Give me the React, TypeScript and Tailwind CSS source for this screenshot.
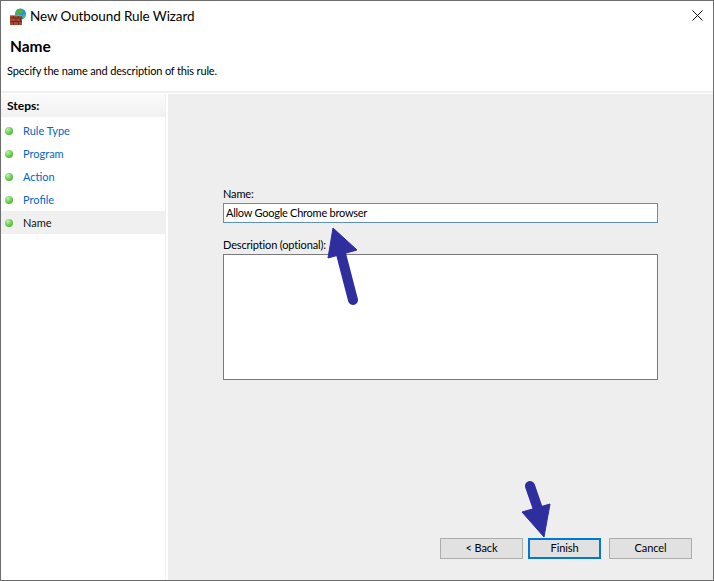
import React from "react";

const steps = ["Rule Type", "Program", "Action", "Profile", "Name"];

const WizardIcon = () => (
  <svg width="17" height="17" viewBox="0 0 17 17" className="shrink-0">
    <circle cx="10.5" cy="6" r="5.500" fill="#2b8fdc" />
    <path d="M7 1.500c2-1 4.500-1 5.500.5s-.5 3-2 3.500-1.500 2.500-3 2-2-5-.5-6z" fill="#4fb04a" />
    <path d="M13 6.500c1 0 2.300.2 2.800.6-.2 1.500-1 2.900-2 3.400l-1.500-1.500z" fill="#62b84f" />
    <rect x="0" y="7" width="12" height="10" fill="#a84a34" />
    <path d="M0 10h12M0 13.500h12M3.500 7v3M8.500 7v3M6 10v3.500M10.500 10v3.500M3.500 13.500V17M8.500 13.500V17" stroke="#6f2c1d" strokeWidth="1" />
    <path d="M0 7.500h12" stroke="#cf8268" strokeWidth="1" />
  </svg>
);

const StepDot = () => (
  <span className="w-2 h-2 rounded-full shrink-0 bg-[radial-gradient(circle_at_35%_30%,#c4eeb0,#5cc63e_60%,#3fa52c)]" />
);

const WizardButton = ({ label, active }: { label: string; active?: boolean }) => (
  <button
    className={
      "h-[21px] bg-[#e1e1e1] text-[11px] tracking-[-0.1px] text-black " +
      (active ? "w-[73px] border-2 border-[#0078d7]" : "w-[83px] border border-[#adadad]")
    }
  >
    {label}
  </button>
);

export default function App() {
  return (
    <div className="relative w-[714px] h-[581px] flex flex-col overflow-hidden bg-white border border-[#6d6d6d] font-['Lato',sans-serif] text-[11px] tracking-[-0.15px] text-black">
      {/* title bar */}
      <div className="h-[31px] flex items-center pl-[9px] pr-[10px] shrink-0">
        <WizardIcon />
        <span className="ml-[3px] text-[13.5px] tracking-[-0.1px] text-[#000]">New Outbound Rule Wizard</span>
        <svg width="11" height="11" viewBox="0 0 11 11" className="ml-auto mb-[2px]">
          <path d="M.5.5l10 10M10.500.5l-10 10" stroke="#111" strokeWidth="1" />
        </svg>
      </div>

      {/* page header */}
      <div className="h-[61px] shrink-0 border-b-2 border-[#f0f0f0] pl-[6px]">
        <div className="pl-[3px] pt-[5px] text-[15.5px] tracking-normal font-bold leading-[18px]">Name</div>
        <div className="mt-[8px] leading-[16px]">Specify the name and description of this rule.</div>
      </div>

      <div className="flex-1 flex min-h-0 pt-[1px]">
        {/* steps */}
        <div className="w-[165px] shrink-0 bg-white border-r border-[#f0f0f0]">
          <div className="h-[23px] mb-[2px] flex items-center pl-[6px] text-[12px] tracking-normal font-bold bg-gradient-to-b from-[#fbfbfb] to-[#f1f1f1]">
            Steps:
          </div>
          <div className="flex flex-col">
            {steps.map((step) => (
              <div
                key={step}
                className={
                  "h-[23px] flex items-center pl-[4px] gap-[10px] tracking-normal " +
                  (step === "Name" ? "bg-[#f0f0f0] text-[#111]" : "text-[#0066cc]")
                }
              >
                <StepDot />
                <span className="pt-[1px]">{step}</span>
              </div>
            ))}
          </div>
        </div>

        {/* form */}
        <div className="flex-1 ml-[2px] bg-[#eeeeee] flex flex-col pl-[55px] pr-[55px] pt-[92px] pb-[21px]">
          <label className="leading-[16px]">Name:</label>
          <input
            readOnly
            value="Allow Google Chrome browser"
            className="mt-[1px] h-[20px] w-full bg-white border border-[#5f8fb5] px-[2px] pb-[2px] text-[11px] tracking-[-0.25px] outline-none"
          />
          <label className="mt-[14px] leading-[16px]">Description (optional):</label>
          <textarea
            readOnly
            className="mt-[1px] h-[126px] w-full bg-white border border-[#7a7a7a] resize-none outline-none"
          />
          <div className="mt-auto flex justify-end gap-[5px] -mr-[34px]">
            <WizardButton label="< Back" />
            <WizardButton label="Finish" active />
            <span className="ml-[3px]">
              <WizardButton label="Cancel" />
            </span>
          </div>
        </div>
      </div>

      {/* annotation arrows */}
      <svg width="714" height="581" className="absolute -left-px -top-px pointer-events-none">
        <g fill="#2e2e9f" stroke="#2e2e9f" strokeLinejoin="round">
          <path d="M333 228L328 258L357 250Z" strokeWidth="1" />
          <path d="M340 250L353 300" strokeWidth="10" strokeLinecap="round" fill="none" />
          <path d="M544 537L522 512L550 504Z" strokeWidth="1" />
          <path d="M530 486L539 512" strokeWidth="10" strokeLinecap="round" fill="none" />
        </g>
      </svg>
    </div>
  );
}
